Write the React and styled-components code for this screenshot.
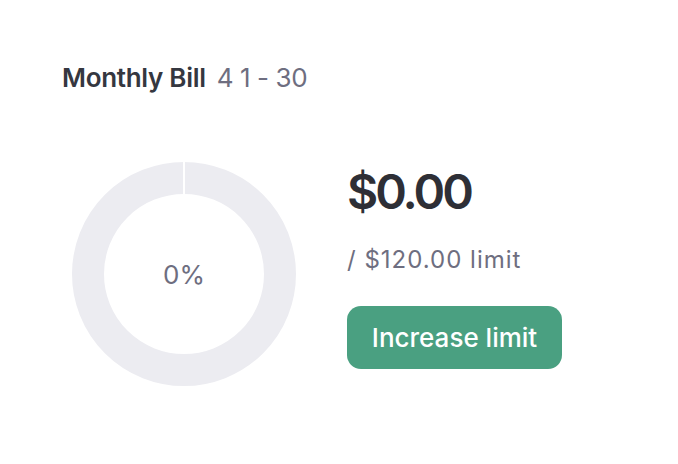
import React from 'react'
import styled, { createGlobalStyle } from 'styled-components'

const Global = createGlobalStyle`
body{
  margin:0;
  background:#fff;
  font-family:Inter, "Noto Sans", sans-serif;
}
`
const Page = styled.div`
width:678px;
height:464px;
box-sizing:border-box;
padding:62px 0 0 62px;
`
const Header = styled.div`
display:flex;
align-items:baseline;
gap:11px;
font-size:26px;
line-height:32px;
`
const Title = styled.span`
font-weight:600;
color:#353740;
letter-spacing:-0.3px;
`
const Range = styled.span`
color:#6e6e80;
letter-spacing:-0.4px;
`
const Body = styled.div`
display:flex;
align-items:flex-start;
gap:51px;
margin-top:68px;
padding-left:10px;
`
const Ring = styled.div`
width:224px;
height:224px;
position:relative;
display:flex;
justify-content:center;
align-items:center;
`
const Percent = styled.div`
position:absolute;
font-size:26px;
color:#6e6e80;
`
const Info = styled.div`
display:flex;
flex-direction:column;
align-items:flex-start;
margin-top:2px;
`
const Amount = styled.div`
font-size:48px;
font-weight:600;
color:#2e2f36;
letter-spacing:-3px;
line-height:56px;
`
const Limit = styled.div`
font-size:24px;
color:#6e6e80;
margin-top:25px;
line-height:30px;
letter-spacing:1px;
`
const Button = styled.button`
margin-top:31px;
width:215px;
height:63px;
padding:0;
border:none;
border-radius:14px;
background:#4aa081;
color:#fff;
font-family:inherit;
font-size:26px;
font-weight:500;
cursor:pointer;
`

export default function App(){
  const r = 96
  return (
    <Page>
      <Global />
      <Header>
        <Title>Monthly Bill</Title>
        <Range>4 1 - 30</Range>
      </Header>
      <Body>
        <Ring>
          <svg width="224" height="224" viewBox="0 0 224 224">
            <circle cx="112" cy="112" r={r} fill="none" stroke="#ececf1" strokeWidth="32" />
            <line x1="112" y1="0" x2="112" y2="32" stroke="#fff" strokeWidth="2" />
          </svg>
          <Percent>0%</Percent>
        </Ring>
        <Info>
          <Amount>$0.00</Amount>
          <Limit>/ $120.00 limit</Limit>
          <Button>Increase limit</Button>
        </Info>
      </Body>
    </Page>
  )
}
